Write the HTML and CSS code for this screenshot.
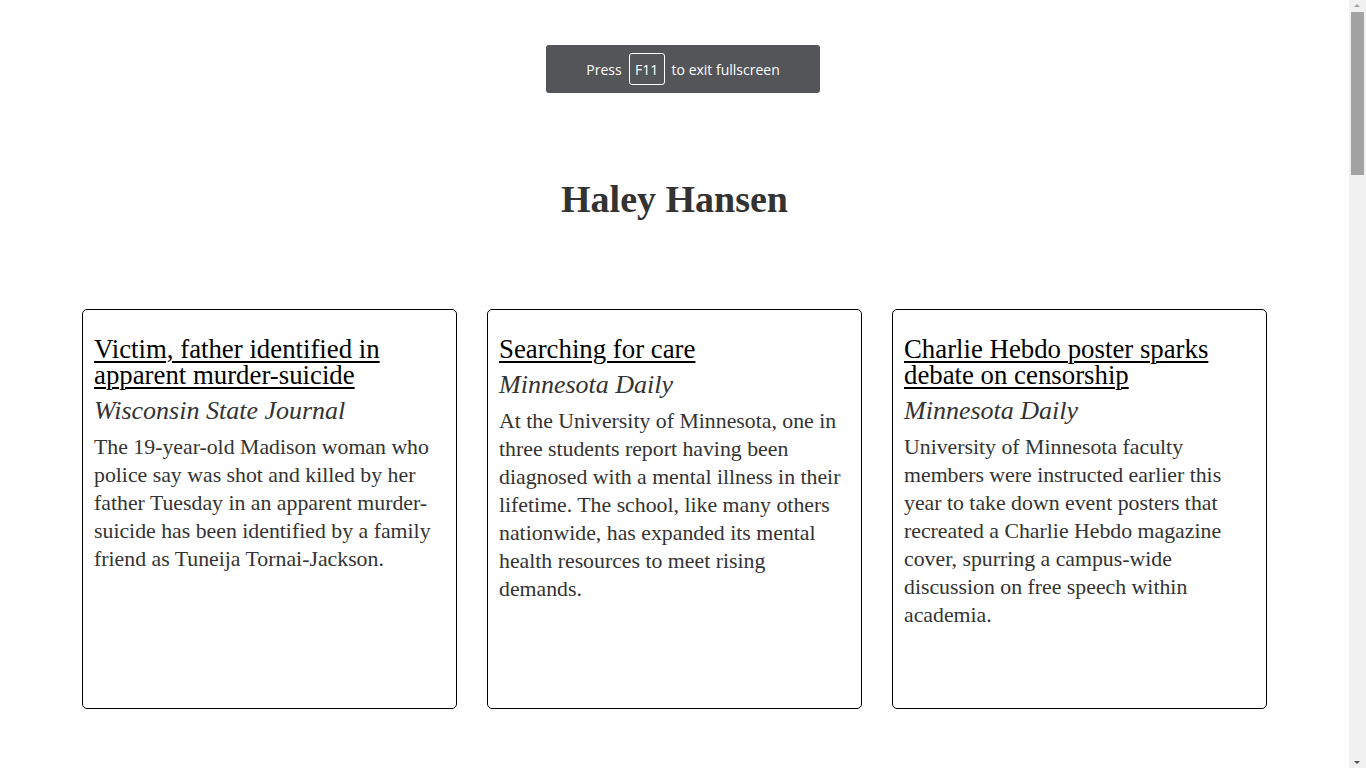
FILE: index.html
```html
<!DOCTYPE html>
<html lang="en">
<head>
<meta charset="utf-8">
<title>Haley Hansen</title>
<link rel="stylesheet" href="styles.css">
</head>
<body>
<div class="fs-banner">
  <span>Press</span>
  <span class="key">F11</span>
  <span>to exit fullscreen</span>
</div>
<main class="page">
  <h1 class="name">Haley Hansen</h1>
  <section class="cards">
    <article class="card">
      <h2 class="card-title"><a href="#">Victim, father identified in apparent murder-suicide</a></h2>
      <p class="card-source">Wisconsin State Journal</p>
      <p class="card-text">The 19-year-old Madison woman who police say was shot and killed by her father Tuesday in an apparent murder-suicide has been identified by a family friend as Tuneija Tornai-Jackson.</p>
    </article>
    <article class="card">
      <h2 class="card-title"><a href="#">Searching for care</a></h2>
      <p class="card-source">Minnesota Daily</p>
      <p class="card-text">At the University of Minnesota, one in three students report having been diagnosed with a mental illness in their lifetime. The school, like many others nationwide, has expanded its mental health resources to meet rising demands.</p>
    </article>
    <article class="card">
      <h2 class="card-title"><a href="#">Charlie Hebdo poster sparks debate on censorship</a></h2>
      <p class="card-source">Minnesota Daily</p>
      <p class="card-text">University of Minnesota faculty members were instructed earlier this year to take down event posters that recreated a Charlie Hebdo magazine cover, spurring a campus-wide discussion on free speech within academia.</p>
    </article>
  </section>
</main>
<div class="scrollbar" aria-hidden="true">
  <span class="sb-arrow sb-up"></span>
  <span class="sb-thumb"></span>
  <span class="sb-arrow sb-down"></span>
</div>
</body>
</html>
```

FILE: styles.css
```css
html, body {
  margin: 0;
  padding: 0;
  background: #fff;
}

html {
  overflow: hidden;
}

body {
  font-family: "Liberation Serif", "Times New Roman", serif;
  color: #333;
}

.page {
  width: calc(100% - 17px);
  min-height: 3450px;
  padding-top: 176px;
  box-sizing: border-box;
}

.fs-banner {
  position: absolute;
  top: 45px;
  left: 546px;
  width: 274px;
  height: 48px;
  background: #535559;
  border-radius: 3px;
  display: flex;
  align-items: center;
  justify-content: center;
  gap: 7px;
  font-family: "Open Sans", "Noto Sans", sans-serif;
  font-size: 14px;
  color: #fff;
  box-sizing: border-box;
  z-index: 2;
}

.fs-banner .key {
  display: inline-flex;
  align-items: center;
  justify-content: center;
  width: 36px;
  height: 32px;
  box-sizing: border-box;
  border: 1px solid #fff;
  border-radius: 3px;
}

.name {
  margin: 0;
  text-align: center;
  font-size: 38px;
  line-height: 47px;
  font-weight: bold;
  color: #333;
}

.cards {
  margin-top: 86px;
  display: grid;
  grid-template-columns: repeat(3, 375px);
  column-gap: 30px;
  justify-content: center;
}

.card {
  height: 400px;
  box-sizing: border-box;
  border: 1px solid #000;
  border-radius: 5px;
  padding: 26px 10px 0 11px;
}

.card-title {
  margin: 0;
  font-size: 26.8px;
  line-height: 26px;
  font-weight: normal;
}

.card-title a {
  color: #000;
  text-decoration: underline;
  text-underline-offset: 3px;
  text-decoration-thickness: 2px;
}

.card-source {
  margin: 10px 0 0;
  font-size: 26px;
  line-height: 26px;
  font-style: italic;
  color: #333;
}

.card-text {
  margin: 9px 0 0;
  font-size: 21.8px;
  line-height: 28px;
  color: #333;
}

/* imitation of the browser's vertical scrollbar */
.scrollbar {
  position: fixed;
  top: 0;
  right: 0;
  width: 17px;
  height: 100vh;
  background: #f1f1f1;
  z-index: 3;
}

.sb-thumb {
  position: absolute;
  left: 2px;
  top: 12px;
  width: 13px;
  height: 163px;
  background: #a3a3a3;
}

.sb-arrow {
  position: absolute;
  left: 5px;
  width: 0;
  height: 0;
  border-left: 3.5px solid transparent;
  border-right: 3.5px solid transparent;
}

.sb-up {
  top: 4px;
  border-bottom: 3.5px solid #a3a3a3;
}

.sb-down {
  bottom: 4px;
  border-top: 3.5px solid #505050;
}
```
